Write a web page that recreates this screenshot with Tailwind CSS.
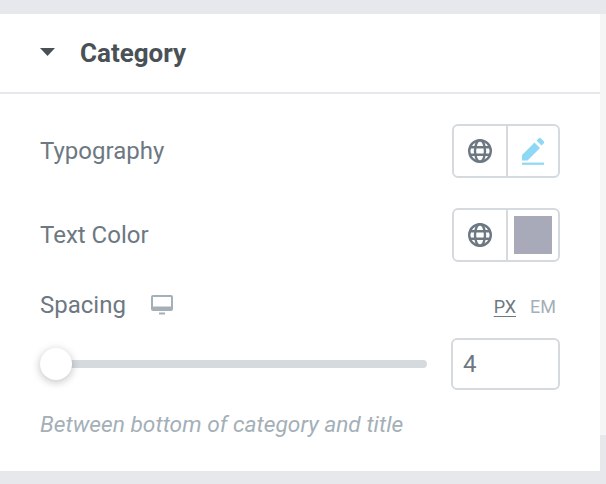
<!DOCTYPE html>
<html lang="en">
<head>
  <meta charset="UTF-8" />
  <title>Category panel</title>
  <script src="https://cdn.jsdelivr.net/npm/@tailwindcss/browser@4"></script>
</head>
<body class="w-[606px] h-[484px] overflow-hidden bg-[#e6e8eb] font-['Roboto',sans-serif]">
  <div class="flex pt-[14px]">
    <!-- Panel -->
    <div class="w-[600px] h-[457px] bg-white">
      <div class="h-[80px] border-b-2 border-[#e6e8eb] flex items-center pl-[40px]">
        <svg class="w-[15px] h-[8px] mb-[3px]" viewBox="0 0 15 8"><path d="M0 0H15L7.5 8Z" fill="#495157"/></svg>
        <h2 class="ml-[25px] text-[26px] font-bold text-[#495157]">Category</h2>
      </div>

      <div class="pl-[40px] pr-[40px]">
        <!-- Typography -->
        <div class="flex items-center justify-between mt-[30px] h-[54px]">
          <span class="text-[24px] text-[#6d7882] mb-[1px]">Typography</span>
          <div class="flex w-[108px] h-[54px] border-2 border-[#d5dadf] rounded-[6px]">
            <div class="w-[54px] border-r-2 border-[#d5dadf] flex items-center justify-center">
              <svg class="w-[24px] h-[24px]" viewBox="0 0 24 24" fill="none" stroke="#6d7882" stroke-width="2.4"><circle cx="12" cy="12" r="10.8"/><ellipse cx="12" cy="12" rx="5" ry="10.8"/><path d="M1.5 8.2H22.5M1.5 15.8H22.5"/></svg>
            </div>
            <div class="flex-1 flex items-center justify-center">
              <svg class="w-[24px] h-[28px]" viewBox="0 0 24 28"><path d="M1 23V18L13.5 5.5L19 11L6.5 23.5L1 23.5Z M15.5 3.5L17.8 1.2Q18.8 0.4 19.8 1.2L22.8 4.2Q23.6 5.2 22.8 6.2L20.5 8.5Z" fill="#8ed8f5"/><rect x="1" y="25.6" width="22" height="2.2" fill="#8ed8f5"/></svg>
            </div>
          </div>
        </div>

        <!-- Text Color -->
        <div class="flex items-center justify-between mt-[30px] h-[54px]">
          <span class="text-[24px] text-[#6d7882] mb-[1px]">Text Color</span>
          <div class="flex w-[108px] h-[54px] border-2 border-[#d5dadf] rounded-[6px]">
            <div class="w-[54px] border-r-2 border-[#d5dadf] flex items-center justify-center">
              <svg class="w-[24px] h-[24px]" viewBox="0 0 24 24" fill="none" stroke="#6d7882" stroke-width="2.4"><circle cx="12" cy="12" r="10.8"/><ellipse cx="12" cy="12" rx="5" ry="10.8"/><path d="M1.5 8.2H22.5M1.5 15.8H22.5"/></svg>
            </div>
            <div class="flex-1 flex items-center justify-center">
              <div class="w-[38px] h-[38px] bg-[#a8aab9]"></div>
            </div>
          </div>
        </div>

        <!-- Spacing -->
        <div class="flex items-center justify-between mt-[26px] h-[34px]">
          <div class="flex items-center">
            <span class="text-[24px] text-[#6d7882]">Spacing</span>
            <svg class="ml-[25px] w-[22px] h-[21px]" viewBox="0 0 22 21"><path fill-rule="evenodd" d="M2 0H20Q22 0 22 2V14Q22 16 20 16H2Q0 16 0 14V2Q0 0 2 0ZM2 2V11.5H20V2Z" fill="#a4afb7"/><rect x="8" y="17.5" width="6" height="2" fill="#a4afb7"/></svg>
          </div>
          <div class="flex items-center text-[18px] pr-[4px] gap-[14px] mt-[2px]">
            <span class="text-[#6d7882] underline underline-offset-[3px]">PX</span>
            <span class="text-[#a4afb7]">EM</span>
          </div>
        </div>

        <div class="flex items-center mt-[16px] h-[52px]">
          <div class="relative w-[387px] h-[8px] rounded-full bg-[#d5dadf]">
            <div class="absolute left-0 top-[-12px] w-[32px] h-[32px] rounded-full bg-white shadow-[0_2px_8px_rgba(0,0,0,0.25)]"></div>
          </div>
          <div class="ml-[24px] w-[109px] h-[52px] border-2 border-[#d5dadf] rounded-[6px] flex items-center pl-[10px] text-[24px] text-[#6d7882]">4</div>
        </div>

        <p class="mt-[18px] text-[22.75px] italic text-[#a4afb7]">Between bottom of category and title</p>
      </div>
    </div>
    <!-- Right strip -->
    <div class="w-[6px] h-[421px] bg-[#f5f5f6]"></div>
  </div>
</body>
</html>
